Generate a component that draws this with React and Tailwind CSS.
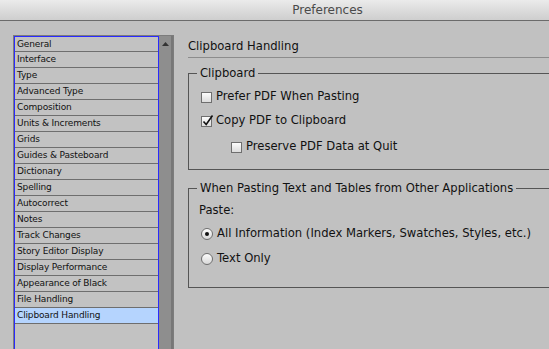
const items = [
  "General",
  "Interface",
  "Type",
  "Advanced Type",
  "Composition",
  "Units & Increments",
  "Grids",
  "Guides & Pasteboard",
  "Dictionary",
  "Spelling",
  "Autocorrect",
  "Notes",
  "Track Changes",
  "Story Editor Display",
  "Display Performance",
  "Appearance of Black",
  "File Handling",
  "Clipboard Handling",
];

function Checkbox({ checked }) {
  return (
    <span className="relative inline-block w-[11px] h-[11px] border border-[#6f6f6f] bg-gradient-to-b from-[#fdfdfd] to-[#dcdcdc] shrink-0">
      {checked && (
        <svg className="absolute left-[0px] top-[-3px]" width="12" height="13" viewBox="0 0 12 13">
          <path d="M1.5 7.5 L4.2 10.5 L10.5 1.5" fill="none" stroke="#111" strokeWidth="1.6" />
        </svg>
      )}
    </span>
  );
}

function Radio({ checked }) {
  return (
    <span className="inline-flex items-center justify-center w-[12px] h-[12px] rounded-full border border-[#6f6f6f] bg-gradient-to-b from-[#fdfdfd] to-[#d8d8d8] shrink-0">
      {checked && <span className="w-[4px] h-[4px] rounded-full bg-[#111]" />}
    </span>
  );
}

export default function App() {
  return (
    <div className="w-[549px] h-[349px] overflow-hidden bg-[#c1c1c1] text-[#111] font-['DejaVu_Sans',sans-serif]">
      <div className="h-[21px] border-b border-[#6b6b6b] bg-gradient-to-b from-[#ebebeb] to-[#cecece] flex items-center justify-center pl-[106px]">
        <span className="text-[12px] leading-[14px] text-[#4a4a4a]">Preferences</span>
      </div>
      <div className="flex">
        <div className="pl-[13px] pt-[14px] shrink-0">
          <div className="flex border border-[#7c7c7c] h-[330px]">
            <div className="w-[145px] border border-[#2a2aff] bg-[#c2c2c2]">
              {items.map((it, i) => (
                <div
                  key={it}
                  className={
                    (i === 0 ? "h-[15px] " : "h-[16px] ") +
                    "border-b border-[#6e6e6e] px-[2px] text-[9px] tracking-[-0.15px] leading-[14px] whitespace-nowrap " +
                    (it === "Clipboard Handling" ? "bg-[#b5d4fe]" : "")
                  }
                >
                  {it}
                </div>
              ))}
            </div>
            <div className="w-[14px] bg-[#8e8e8e] border-r-[2px] border-[#777] flex justify-center pt-[6px]">
              <svg width="7" height="4" viewBox="0 0 7 4">
                <path d="M0 4 L3.5 0 L7 4 Z" fill="#333" />
              </svg>
            </div>
          </div>
        </div>
        <div className="ml-[14px] w-[380px] shrink-0">
          <div className="pt-[17px] pb-[3px] border-b border-[#8c8c8c]">
            <div className="text-[11.6px] leading-[16px]">Clipboard Handling</div>
          </div>
          <fieldset className="mt-[8px] border border-r-0 border-[#555] pl-[12px] pt-[8px] pb-[14px] text-[11.6px]">
            <legend className="ml-[-4px] px-[3px] leading-[14px]">Clipboard</legend>
            <div className="flex flex-col gap-[8px]">
              <label className="flex items-center gap-[4px] h-[16px] mt-[1px]">
                <Checkbox />
                <span>Prefer PDF When Pasting</span>
              </label>
              <label className="flex items-center gap-[4px] h-[16px]">
                <Checkbox checked />
                <span>Copy PDF to Clipboard</span>
              </label>
              <label className="flex items-center gap-[4px] h-[16px] ml-[30px] mt-[2px]">
                <Checkbox />
                <span>Preserve PDF Data at Quit</span>
              </label>
            </div>
          </fieldset>
          <fieldset className="mt-[11px] border border-r-0 border-[#555] pl-[12px] pt-[7px] pb-[20px] text-[11.6px]">
            <legend className="ml-[-4px] px-[3px] leading-[14px]">When Pasting Text and Tables from Other Applications</legend>
            <div className="flex flex-col gap-[8px]">
              <div className="h-[16px] leading-[16px] ml-[-2px]">Paste:</div>
              <label className="flex items-center gap-[4px] h-[16px]">
                <Radio checked />
                <span>All Information (Index Markers, Swatches, Styles, etc.)</span>
              </label>
              <label className="flex items-center gap-[4px] h-[16px] mt-[1px]">
                <Radio />
                <span>Text Only</span>
              </label>
            </div>
          </fieldset>
        </div>
      </div>
    </div>
  );
}
